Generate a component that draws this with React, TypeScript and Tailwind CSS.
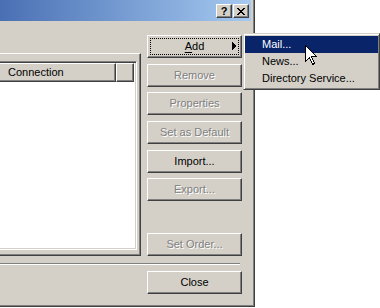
import React from "react";

const raised =
  "bg-[#d4d0c8] border border-t-white border-l-white border-r-[#404040] border-b-[#404040] shadow-[inset_-1px_-1px_0_#808080]";

function Btn({
  children,
  disabled,
  className = "",
}: {
  children: React.ReactNode;
  disabled?: boolean;
  className?: string;
}) {
  return (
    <div
      className={`${raised} relative h-[23px] w-[95px] flex items-center justify-center text-[11px] leading-none ${
        disabled ? "text-[#808080] [text-shadow:1px_1px_0_#ffffff]" : "text-black"
      } ${className}`}
    >
      {children}
    </div>
  );
}

function Cursor() {
  return (
    <svg width="13" height="21" viewBox="0 0 13 21" className="absolute left-[305px] top-[45px]">
      <path
        d="M0.5 0.5 L0.5 16.5 L4.5 12.5 L7.5 19.5 L9.5 18.5 L6.5 11.5 L11.5 11.5 Z"
        fill="#ffffff"
        stroke="#000000"
        strokeWidth="1"
        shapeRendering="crispEdges"
      />
    </svg>
  );
}

export default function App() {
  return (
    <div className="relative w-[380px] h-[308px] bg-white overflow-hidden font-['Liberation_Sans',Arial,sans-serif] text-[11px]">
      {/* dialog window, left edge cut off */}
      <div className="w-[255px] h-[307px] bg-[#d4d0c8] border-r border-b border-r-[#404040] border-b-[#404040] shadow-[inset_-1px_-1px_0_#808080] flex flex-col">
        {/* title bar */}
        <div className="h-[21px] mr-[3px] bg-gradient-to-r from-[#4a70b4] to-[#a6caf0] flex items-center justify-end pr-[2px] gap-[1px] pt-[1px]">
          <div className={`${raised} w-[16px] h-[14px] flex items-center justify-center font-bold text-[11px] leading-none text-black`}>
            ?
          </div>
          <div className={`${raised} w-[16px] h-[14px] flex items-center justify-center`}>
            <svg width="8" height="7" viewBox="0 0 8 7" shapeRendering="crispEdges">
              <path d="M0 0h2v1H0zM6 0h2v1H6zM1 1h2v1H1zM5 1h2v1H5zM2 2h4v1H2zM3 3h2v1H3zM2 4h4v1H2zM1 5h2v1H1zM5 5h2v1H5zM0 6h2v1H0zM6 6h2v1H6z" fill="#000" />
            </svg>
          </div>
        </div>

        {/* body */}
        <div className="flex">
          {/* tab page with list */}
          <div className="w-[141px] pt-[32px]">
            <div className="h-[203px] border-t border-r border-b border-t-white border-r-[#404040] border-b-[#404040] shadow-[inset_-1px_-1px_0_#808080] pt-[7px] pr-[3px] pb-[5px]">
              <div className="h-full bg-white border-t border-r border-b border-t-[#808080] border-r-white border-b-white shadow-[inset_0_1px_0_#404040,inset_-1px_-1px_0_#d4d0c8] pt-[1px] pr-[2px] flex flex-col">
                <div className="flex h-[19px]">
                  <div className={`${raised} border-l-0 w-[116px] flex items-center pl-[8px] text-black leading-none`}>
                    Connection
                  </div>
                  <div className={`${raised} flex-1`} />
                </div>
              </div>
            </div>
          </div>

          {/* buttons */}
          <div className="ml-[6px] flex flex-col">
            <Btn className="mt-[14px]">
              <div className="absolute left-[2px] top-[2px] right-[2px] bottom-[2px] border border-dotted border-black" />
              <span>
                <span className="underline underline-offset-[2px]">A</span>dd
              </span>
              <svg width="4" height="8" viewBox="0 0 4 8" className="absolute right-[5px] top-[6px]" shapeRendering="crispEdges">
                <path d="M0 0h1v8H0zM1 1h1v6H1zM2 2h1v4H2zM3 3h1v2H3z" fill="#000" />
              </svg>
            </Btn>
            <Btn disabled className="mt-[6px]">Remove</Btn>
            <Btn disabled className="mt-[5px]">Properties</Btn>
            <Btn disabled className="mt-[6px]">Set as Default</Btn>
            <Btn className="mt-[6px]">Import...</Btn>
            <Btn disabled className="mt-[5px]">Export...</Btn>
            <Btn disabled className="mt-[32px]">Set Order...</Btn>
          </div>
        </div>

        {/* separator */}
        <div className="mt-[7px] w-[240px] h-[2px] border-t border-b border-t-[#808080] border-b-white" />

        <Btn className="mt-[6px] ml-[147px]">Close</Btn>
      </div>

      {/* popup menu */}
      <div className="absolute left-[243px] top-[33px] w-[137px] h-[57px] bg-[#d4d0c8] border border-t-[#d4d0c8] border-l-[#d4d0c8] border-r-[#404040] border-b-[#404040] shadow-[inset_1px_1px_0_#ffffff,inset_-1px_-1px_0_#808080] pt-[2px] px-[1px] flex flex-col leading-none">
        <div className="h-[17px] bg-[#0a246a] text-white flex items-center pl-[17px]">Mail...</div>
        <div className="h-[17px] text-black flex items-center pl-[17px]">News...</div>
        <div className="h-[17px] text-black flex items-center pl-[17px]">Directory Service...</div>
      </div>

      <Cursor />
    </div>
  );
}
